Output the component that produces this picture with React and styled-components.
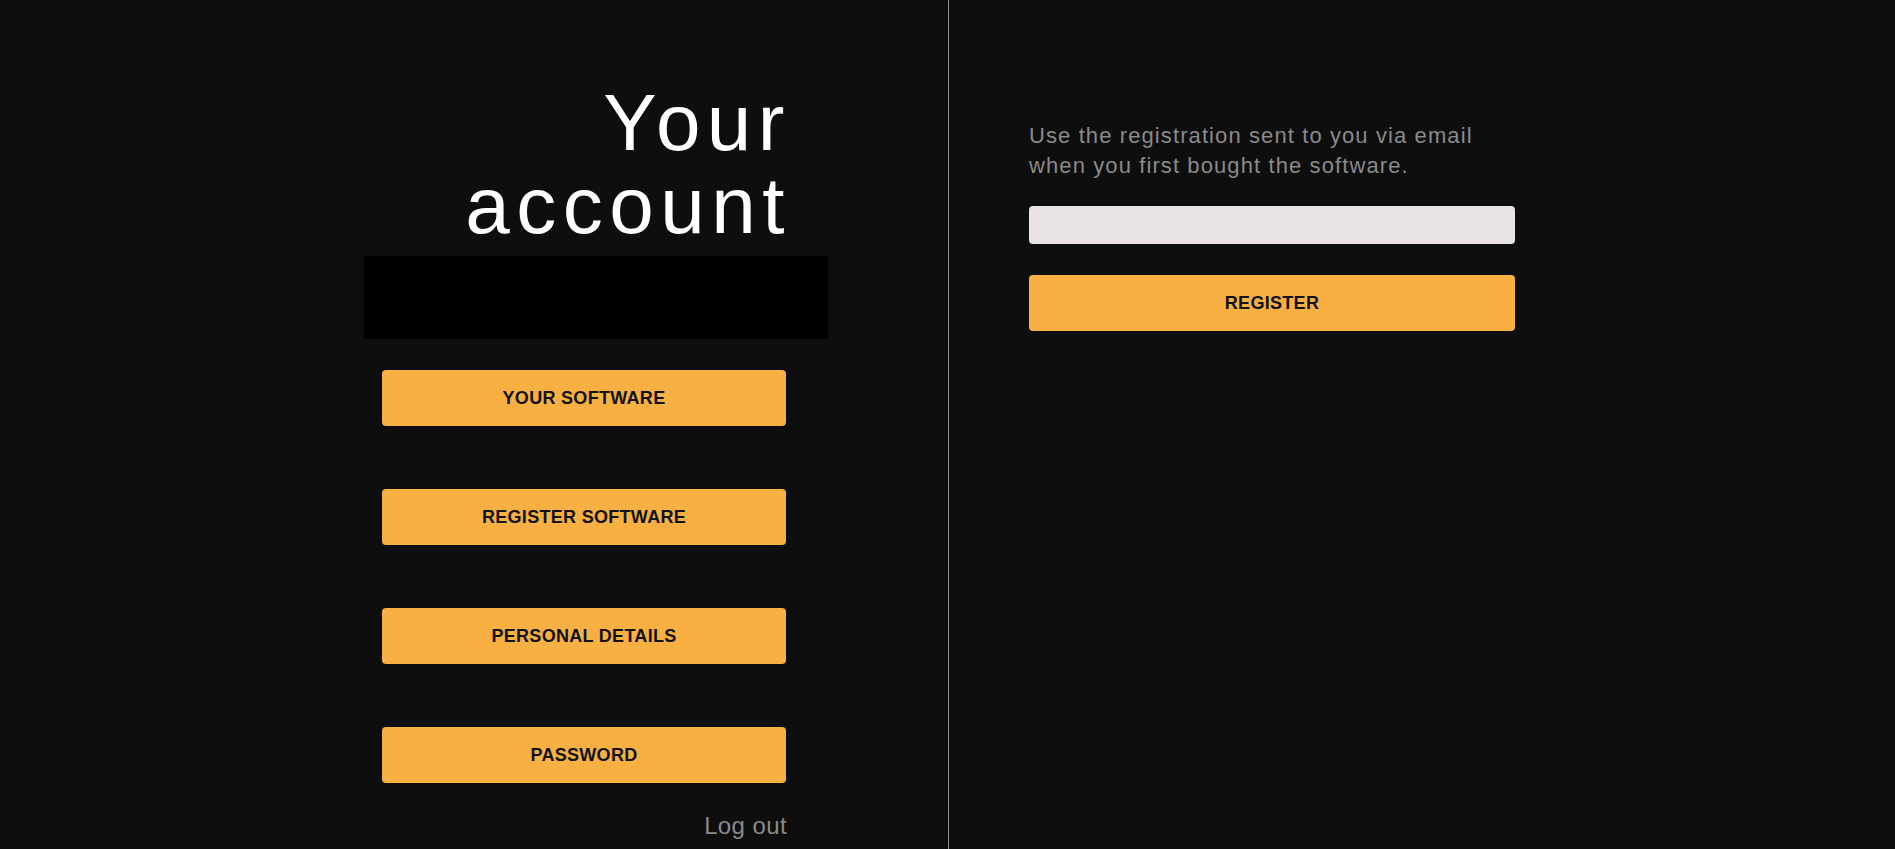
import React from "react";
import styled, { createGlobalStyle } from "styled-components";

const GlobalStyle = createGlobalStyle`
  html, body {
    margin: 0;
    padding: 0;
    background: #0e0e0e;
    font-family: "Liberation Sans", Arial, sans-serif;
  }
`;

const Page = styled.div`
  display: flex;
  min-height: 849px;
  background: #0e0e0e;
`;

const LeftPanel = styled.section`
  width: 949px;
  flex-shrink: 0;
  display: flex;
  justify-content: flex-end;
  padding-right: 120px;
  box-sizing: border-box;
  border-right: 1px solid #8c8c8c;
`;

const Menu = styled.div`
  width: 464px;
  padding-top: 81px;
  display: flex;
  flex-direction: column;
`;

// wide display face: letter-spacing makes up for Liberation's narrower glyphs
const Title = styled.h1`
  margin: 0 37px 9px 0;
  font-size: 80px;
  line-height: 83px;
  font-weight: 400;
  letter-spacing: 6.5px;
  color: #ffffff;
  text-align: right;
`;

const Blackout = styled.div`
  height: 83px;
  background: #000;
  margin-bottom: 31px;
`;

const NavList = styled.div`
  display: flex;
  flex-direction: column;
  gap: 63px;
  margin-left: 18px;
  width: 404px;
`;

const ActionButton = styled.button`
  display: block;
  width: ${(p) => (p.$wide ? "100%" : "404px")};
  height: 56px;
  border: none;
  border-radius: 4px;
  background: #f8b043;
  color: #121212;
  font-family: "Liberation Sans", Arial, sans-serif;
  font-size: 18px;
  font-weight: 700;
  letter-spacing: 0.3px;
  text-transform: uppercase;
  cursor: pointer;
`;

const LogOut = styled.a`
  align-self: flex-end;
  margin: 29px 41px 0 0;
  font-size: 24px;
  line-height: 28px;
  letter-spacing: 0.4px;
  color: #8a8a8a;
  text-decoration: none;
`;

const RightPanel = styled.section`
  flex: 1;
  padding: 121px 0 0 80px;
`;

const Form = styled.div`
  width: 486px;
  display: flex;
  flex-direction: column;
`;

const Hint = styled.p`
  margin: 0 0 25px;
  font-size: 22px;
  line-height: 30px;
  letter-spacing: 1.1px;
  color: #8a8a8a;
`;

const CodeInput = styled.input`
  height: 38px;
  box-sizing: border-box;
  border: none;
  border-radius: 4px;
  background: #e8e2e2;
  margin-bottom: 31px;
  padding: 0 10px;
  font-size: 18px;
`;

const links = ["Your software", "Register software", "Personal details", "Password"];

export default function App() {
  return (
    <>
      <GlobalStyle />
      <Page>
        <LeftPanel>
          <Menu>
            <Title>
              Your
              <br />
              account
            </Title>
            <Blackout />
            <NavList>
              {links.map((label) => (
                <ActionButton key={label}>{label}</ActionButton>
              ))}
            </NavList>
            <LogOut href="#">Log out</LogOut>
          </Menu>
        </LeftPanel>
        <RightPanel>
          <Form>
            <Hint>
              Use the registration sent to you via email
              <br />
              when you first bought the software.
            </Hint>
            <CodeInput type="text" />
            <ActionButton $wide>Register</ActionButton>
          </Form>
        </RightPanel>
      </Page>
    </>
  );
}
